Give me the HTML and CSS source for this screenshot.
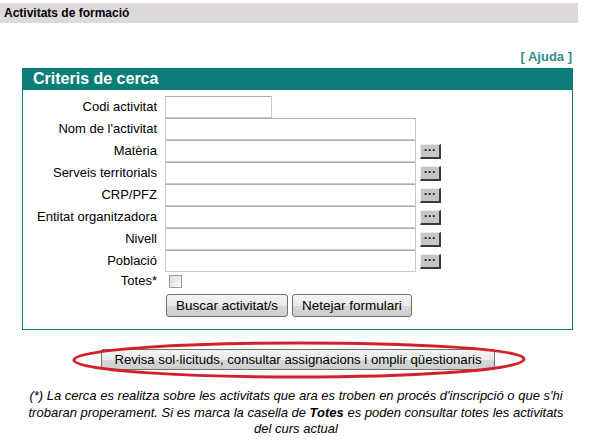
FILE: index.html
```html
<!DOCTYPE html>
<html lang="ca">
<head>
<meta charset="utf-8">
<title>Activitats de formació</title>
<link rel="stylesheet" href="styles.css">
</head>
<body>
<div class="titlebar">Activitats de formació</div>
<div class="help"><a href="#">[ Ajuda ]</a></div>
<div class="panel">
  <div class="panel-head">Criteris de cerca</div>
  <form class="grid">
    <label>Codi activitat</label>
    <div class="field"><input class="in short" type="text"></div>
    <label>Nom de l'activitat</label>
    <div class="field"><input class="in" type="text"></div>
    <label>Matèria</label>
    <div class="field"><input class="in" type="text"><span class="dots">···</span></div>
    <label>Serveis territorials</label>
    <div class="field"><input class="in" type="text"><span class="dots">···</span></div>
    <label>CRP/PFZ</label>
    <div class="field"><input class="in" type="text"><span class="dots">···</span></div>
    <label>Entitat organitzadora</label>
    <div class="field"><input class="in" type="text"><span class="dots">···</span></div>
    <label>Nivell</label>
    <div class="field"><input class="in" type="text"><span class="dots">···</span></div>
    <label>Població</label>
    <div class="field"><input class="in" type="text"><span class="dots">···</span></div>
    <label class="totes">Totes*</label>
    <div class="field totes"><span class="check"></span></div>
    <span></span>
    <div class="btns"><button type="button" class="btn">Buscar activitat/s</button><button type="button" class="btn">Netejar formulari</button></div>
  </form>
</div>
<div class="review">
  <button type="button" class="btn big">Revisa sol·licituds, consultar assignacions i omplir qüestionaris</button>
  <svg class="ring" width="460" height="40" viewBox="0 0 460 40"><path d="M230 3 C 330 3, 454 8, 454 19 C 454 31, 330 37, 228 37 C 120 37, 4 31, 4 20 C 4 9, 120 3, 230 3 Z" fill="none" stroke="#d4202c" stroke-width="3"/></svg>
</div>
<p class="note">(*) La cerca es realitza sobre les activitats que ara es troben en procés d'inscripció o que s'hi trobaran properament. Si es marca la casella de <b>Totes</b> es poden consultar totes les activitats del curs actual</p>
</body>
</html>
```
FILE: styles.css
```css
body {
  margin: 0;
  font-family: "Liberation Sans", Arial, sans-serif;
  font-size: 13px;
  color: #000;
  background: #fff;
}
.titlebar {
  margin-top: 3px;
  width: 574px;
  height: 20px;
  line-height: 20px;
  padding-left: 4px;
  background: #dedada;
  font-weight: bold;
  font-size: 12px;
}
.help {
  width: 572px;
  text-align: right;
  margin-top: 26px;
  height: 19px;
  font-size: 13px;
  font-weight: bold;
}
.help a {
  color: #2f8e8c;
  text-decoration: none;
}
.panel {
  margin-left: 22px;
  width: 549px;
  border: 1px solid #0b7d79;
  border-top: none;
}
.panel-head {
  height: 22px;
  line-height: 22px;
  background: #0b7d79;
  color: #fff;
  font-weight: bold;
  font-size: 16px;
  padding-left: 10px;
}
.grid {
  display: grid;
  grid-template-columns: 134px 1fr;
  column-gap: 8px;
  padding: 6px 0 12px 0;
  margin: 0;
}
.grid label {
  text-align: right;
  font-size: 13px;
  height: 22px;
  line-height: 22px;
}
.field {
  display: flex;
  align-items: center;
  height: 22px;
}
.in {
  box-sizing: border-box;
  width: 251px;
  height: 22px;
  margin: 0;
  border: 1px solid #c9c9c9;
  border-top-color: #b0b0b0;
  background: #fff;
  padding: 0 3px;
}
.in.short {
  width: 107px;
}
.dots {
  box-sizing: border-box;
  margin-left: 4px;
  width: 21px;
  height: 15px;
  background: #c6c6c6;
  border-top: 1px solid #ececec;
  border-left: 1px solid #ececec;
  border-right: 2px solid #3a3a3a;
  border-bottom: 2px solid #3a3a3a;
  font-size: 12px;
  line-height: 11px;
  text-align center;
  text-align: center;
  font-weight: bold;
  color: #1a1a1a;
}
.grid .totes { height: 18px; line-height: 18px; }
.check {
  box-sizing: border-box;
  margin-left: 4px;
  width: 13px;
  height: 13px;
  border: 1px solid #9a9a9a;
  background: linear-gradient(135deg, #dcdcdc, #fafafa);
}
.btns {
  display: flex;
  gap: 4px;
  margin-top: 4px;
  padding-left: 1px;
}
.btn {
  font-family: "Liberation Sans", Arial, sans-serif;
  font-size: 13.5px;
  height: 23px;
  padding: 0 9px;
  border: 1px solid #707070;
  border-radius: 3px;
  background: linear-gradient(#f4f4f4, #e8e8e8 50%, #d8d8d8 51%, #cdcdcd);
  color: #000;
}
.review {
  position: relative;
  margin-top: 19px;
  height: 22px;
  display: flex;
  justify-content: center;
  width: 596px;
}
.btn.big {
  height: 21px;
  width: 394px;
  border-radius: 2px;
  padding: 0;
  font-size: 13.2px;
}
.ring {
  position: absolute;
  left: 70px;
  top: -9px;
}
.note {
  margin: 17px auto 0;
  width: 548px;
  text-align: center;
  font-style: italic;
  font-size: 13px;
  line-height: 16.5px;
}
```
